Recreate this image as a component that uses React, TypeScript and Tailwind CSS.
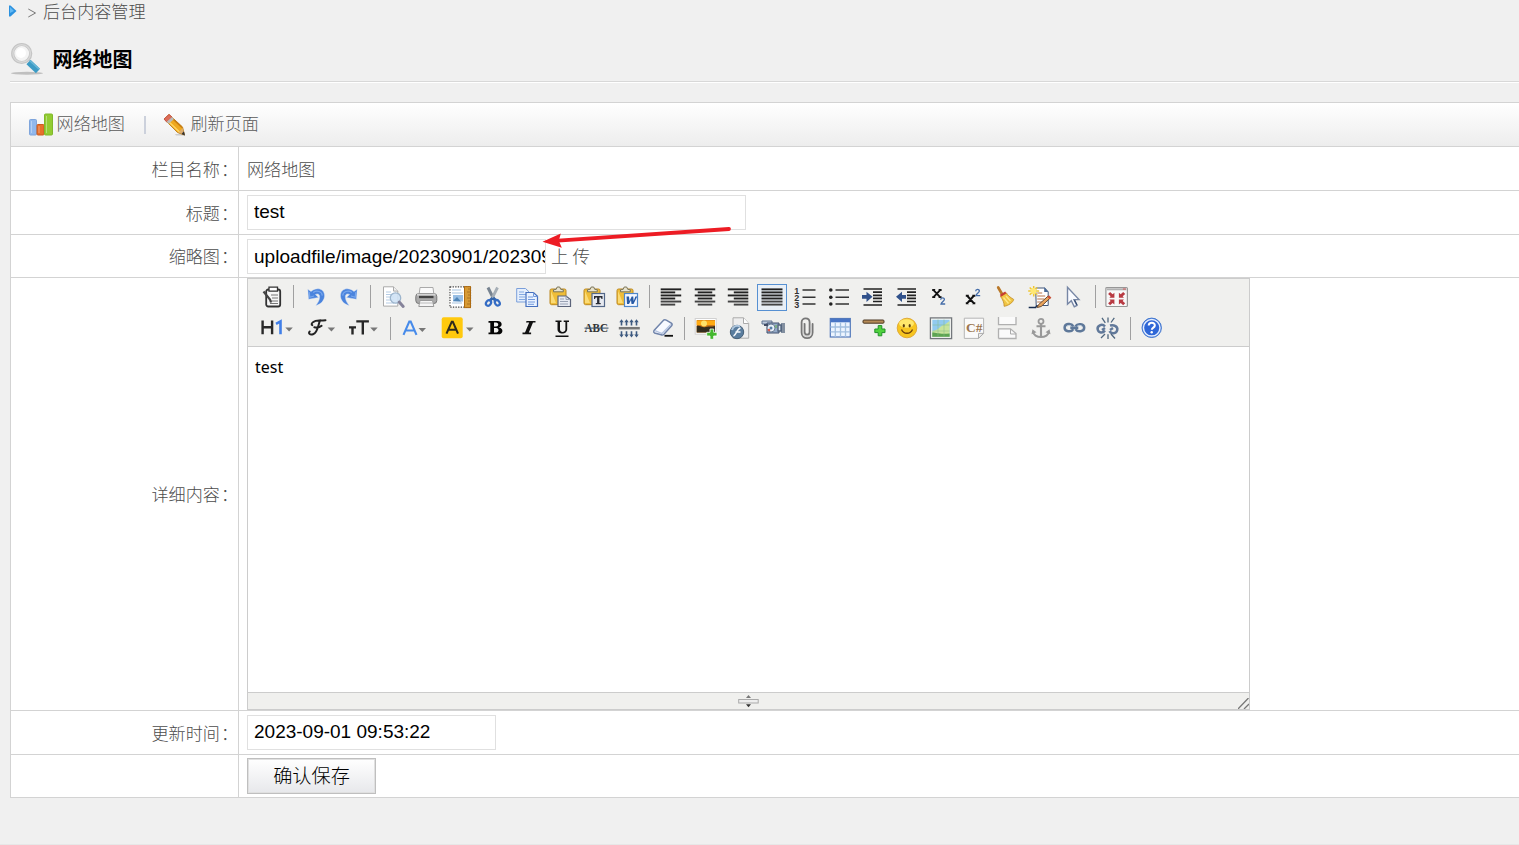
import type { ReactNode } from 'react';

function Icon({ children }: { children: ReactNode }) {
  return (
    <svg className="h-[22px] w-[22px] shrink-0 overflow-visible" viewBox="0 0 22 22" fill="none">
      {children}
    </svg>
  );
}

function Cell({ children, active }: { children: ReactNode; active?: boolean }) {
  return (
    <div className="flex h-[31px] w-[33.5px] shrink-0 items-center justify-center">
      {active ? (
        <div className="mt-[2px] flex h-[27px] w-[30px] items-center justify-center border border-[#5690d2] bg-[#e9eff6] pb-[2px]">{children}</div>
      ) : (
        children
      )}
    </div>
  );
}

function Wide({ children, arrow = 'M25 10.5h7.5l-3.7 4z' }: { children: ReactNode; arrow?: string }) {
  return (
    <div className="flex h-[31px] w-[42.6px] shrink-0 items-center justify-center">
      <svg className="h-[22px] w-[32px] overflow-visible" viewBox="0 0 32 22">
        {children}
        <path d={arrow} fill="#777" />
      </svg>
    </div>
  );
}

function Sep() {
  return (
    <div className="flex w-[10.4px] shrink-0 justify-center">
      <div className="h-[23px] w-px bg-[#a0a0a0]" />
    </div>
  );
}

const Source = () => (
  <Icon>
    <rect x="5.2" y="3.5" width="14" height="17" rx="2" fill="#f7f7f7" stroke="#333" strokeWidth="1.8" />
    <path d="M8 1.2h8.5v4H8z" fill="#fff" stroke="#333" strokeWidth="1.3" />
    <path d="M10 9h7M11 12h6M10 15h7M9 17.5h8" stroke="#777" strokeWidth="1" />
    <path d="M2.5 5.5l6.5 8 1 3" stroke="#444" strokeWidth="2.2" />
  </Icon>
);

const UndoShape = () => (
  <>
    <path d="M2.8 3.3l.8 9.9 10-1.8-3.2-2.9c2.4-1.4 4.4-.3 4.2 2.6-.1 3-1.4 5.7-3.8 8.4 6-1.5 9-5.9 8.7-10.4C19.2 3 12 .4 6 5.5z" fill="#4b84dd" stroke="#dbe5f5" strokeWidth=".4" />
    <path d="M4.2 6l.6 5.3L9 10M8.2 6.4c3.6-2.4 8.9-1 9.1 3.2" stroke="#78a7ed" strokeWidth="1.2" />
  </>
);

const Preview = () => (
  <Icon>
    <path d="M1.5.8h10l4.3 4.3v15H1.5z" fill="#fff" stroke="#aaa" />
    <path d="M11.5.8v4.3h4.3" fill="#eee" stroke="#aaa" />
    <path d="M4 6h5M4 8.5h8M4 11h8M4 14h8M4 17h8" stroke="#b5cce4" />
    <circle cx="13.5" cy="12" r="5.2" fill="#cfe2f5" fillOpacity=".9" stroke="#9db5cc" strokeWidth="1.3" />
    <path d="M17.2 16l4 4.4" stroke="#85839a" strokeWidth="3" strokeLinecap="round" />
  </Icon>
);

const Printer = () => (
  <Icon>
    <path d="M5 1.5h13l1 8H4z" fill="#fafafa" stroke="#aaa" />
    <rect x=".8" y="7.5" width="21" height="10" rx="3" fill="#aaa" stroke="#777" />
    <path d="M2 8.6h18.5" stroke="#d5d5d5" strokeWidth="2" />
    <path d="M4 11h14.5" stroke="#444" strokeWidth="2.3" />
    <path d="M5 14.5h12.5l1.3 6H3.8z" fill="#f5f5f5" stroke="#999" />
    <path d="M5 17h13" stroke="#bbb" />
  </Icon>
);

const Template = () => (
  <Icon>
    <rect x="1" y=".8" width="20.5" height="20.4" fill="#fff" stroke="#444" strokeWidth="1.2" strokeDasharray="1.3 1.3" />
    <path d="M3 4h9M3 7h11M3 17h10" stroke="#a8c3e0" strokeWidth="1.2" />
    <rect x="4" y="9" width="10" height="6.5" fill="#98bee4" />
    <path d="M4 15l4-4 4 4.5z" fill="#5186b8" />
    <rect x="15.5" y=".6" width="6" height="21" fill="#d79a35" stroke="#ad6b12" />
    <path d="M19 3h2M18 6h3M19 9h2M18 12h3M19 15h2M18 18h3" stroke="#a06a20" strokeWidth=".8" />
  </Icon>
);

const Cut = () => (
  <Icon>
    <path d="M6 1.5l5.5 11" stroke="#778390" strokeWidth="3" />
    <path d="M15.5 1.5L10 12.5" stroke="#a5aeb6" strokeWidth="2.8" />
    <path d="M10.5 12l-3 3M11 12l3.5 3" stroke="#3465aa" strokeWidth="3" />
    <ellipse cx="6.5" cy="17" rx="2.3" ry="3" stroke="#346cc4" strokeWidth="2.2" transform="rotate(35 6.5 17)" />
    <ellipse cx="15.3" cy="16.8" rx="2.2" ry="2.9" stroke="#346cc4" strokeWidth="2.2" transform="rotate(-35 15.3 16.8)" />
  </Icon>
);

const CopyPages = () => (
  <Icon>
    <path d="M.7 2.5h8.8l3.7 3.5v10H.7z" fill="#e6effc" stroke="#7b9fda" />
    <path d="M3 6h5M3 8.5h7M3 11h6M3 13.5h6" stroke="#83a9e2" />
    <path d="M10 6.5h7.5l4 3.8v10.2H10z" fill="#e9f2ff" stroke="#456fbe" strokeWidth="1.2" />
    <path d="M17.5 6.5v4h4M12 11h5M12 13.5h7M12 16h7M12 18.3h6" stroke="#7299dc" />
  </Icon>
);

const Clipboard = ({ children }: { children: ReactNode }) => (
  <Icon>
    <path d="M1 4.5Q1 3 2.5 3h13Q17 3 17 4.5V17l-2 1.7H2.5Q1 18.5 1 17z" fill="#efbd38" stroke="#bd8920" />
    <path d="M2 5l5 12H2z" fill="#ffe58b" opacity=".75" />
    <path d="M4.5 5.8v-2l2.7-.5 1-2.3h2.5l1 2.3 2.6.5v2z" fill="#e7e3cf" stroke="#7b7559" />
    {children}
  </Icon>
);

const Paste = () => (
  <Clipboard>
    <path d="M9 10h8l4.5 3.5v7H9z" fill="#e8ebf3" stroke="#5c647a" strokeWidth="1.2" />
    <path d="M17 10v3.5h4M11 13h4M11 15.5h8M11 18h8" stroke="#9aa3b5" />
  </Clipboard>
);

const PastePlain = () => (
  <Clipboard>
    <rect x="9" y="7.5" width="12.5" height="13" fill="#e7eaf1" stroke="#536788" strokeWidth="1.2" />
    <path d="M11 10h8.5v3h-1l-.6-1.5h-1.5V17h1.3v1.2h-4.9V17h1.3v-5.5h-1.5l-.6 1.5h-1z" fill="#282b34" />
  </Clipboard>
);

const PasteWord = () => (
  <Clipboard>
    <rect x="8.5" y="7.5" width="13" height="13" fill="#f4f8ff" stroke="#4f87c9" strokeWidth="1.2" />
    <path d="M10.5 10.5h2.5l.5 4.5 2.2-4.5h1.5l.5 4.5 1.7-4.5h1.8L17.5 18h-2l-.5-4-2 4h-2z" fill="#2659a5" />
  </Clipboard>
);

const Lines = ({ shift }: { shift: 'left' | 'center' | 'right' | 'full' }) => {
  const widths = shift === 'full' ? [21, 21, 21, 21, 21, 21] : [20.5, 14.5, 20.5, 14.5, 20.5, 14.5];
  return (
    <Icon>
      {widths.map((w, i) => {
        const x = shift === 'right' ? 21.3 - w : shift === 'center' ? 11 - w / 2 : shift === 'full' ? 0.5 : 0.7;
        return <rect key={i} x={x} y={2.4 + i * 3.05} width={w} height="1.9" fill={i > 3 ? '#444' : '#222'} />;
      })}
    </Icon>
  );
};

const OrderedList = () => (
  <Icon>
    <path d="M8.5 4h13M8.5 11.2h13M8.5 18h13" stroke="#333" strokeWidth="1.5" />
    <text x="0.3" y="7.5" fontSize="9" className="font-['Liberation_Sans'] font-bold" fill="#333">1</text>
    <text x="0.3" y="14.5" fontSize="9" className="font-['Liberation_Sans'] font-bold" fill="#333">2</text>
    <text x="0.3" y="21.5" fontSize="9" className="font-['Liberation_Sans'] font-bold" fill="#333">3</text>
  </Icon>
);

const BulletList = () => (
  <Icon>
    <path d="M7.5 4h13.5M7.5 11.2h13.5M7.5 18h13.5" stroke="#333" strokeWidth="1.5" />
    <g fill="#222"><circle cx="2.8" cy="4" r="1.8" /><circle cx="2.8" cy="11.2" r="1.8" /><circle cx="2.8" cy="18" r="1.8" /></g>
  </Icon>
);

const Indent = ({ out }: { out?: boolean }) => (
  <Icon>
    <path d="M2.5 3h18.5M12 6.2h9M12 9.3h9M12 12.3h9M12 15.5h9M2.5 19h18.5" stroke="#222" strokeWidth="1.7" />
    <path d={out ? 'M1 10.8l6-5v3.3h4v3.6H7V16z' : 'M11.5 10.8l-6-5v3.3H1v3.6h4.5V16z'} fill="#30518b" />
  </Icon>
);

const Script = ({ sup }: { sup?: boolean }) => (
  <Icon>
    <path d={sup ? 'M5 9.5l7 8M12 9.5l-7 8M3.8 9.7h3M10.3 9.7h3M3.8 17.3h3M10.3 17.3h3' : 'M5.3 3.8l7 7.5M12.3 3.8l-7 7.5M4.2 4h3M10.6 4h3M4.2 11.1h3M10.6 11.1h3'} stroke="#111" strokeWidth="1.9" />
    <path d={sup ? 'M13.7 5.3c0-2.4 3.7-2.4 3.7-.2 0 1.5-3 2.4-3.4 4.5h4.2' : 'M12.7 13.7c0-2.4 3.7-2.4 3.7-.2 0 1.5-3 2.4-3.4 4.5h4.2'} stroke="#446ca8" strokeWidth="1.3" />
  </Icon>
);

const Broom = () => (
  <Icon>
    <path d="M3.2 1.5l4.7 8" stroke="#b97829" strokeWidth="2.7" strokeLinecap="round" />
    <path d="M5.5 10.5l6-3.5c1 2.3 3.5 4.2 7.2 6.4-.5 3-5.5 6.5-9.6 6.9C9.3 17 7.8 13.5 5.5 10.5z" fill="#f0c544" stroke="#c28b25" strokeWidth=".8" />
    <path d="M5.4 9.7l5.4-3.3" stroke="#c73e31" strokeWidth="2.2" />
    <path d="M8.5 11.5l5 6M11 10l4.5 5" stroke="#ffe886" strokeWidth="1.3" />
  </Icon>
);

const QuickFormat = () => (
  <Icon>
    <g transform="translate(-.8 0)">
      <path d="M7.5 2h9l3.5 4v13.5h-12z" fill="#fff" stroke="#435779" />
      <path d="M16 1v5h4.5z" fill="#496996" />
      <path d="M9 7h5M9 10h8M9 13h7M9 16h6" stroke="#b87548" strokeWidth="1.2" />
      <path d="M.5 21.5h7l1-2" stroke="#162c50" strokeWidth="1.5" />
      <path d="M10 19l10-9 2 2-9 8.5-4 1z" fill="#eba45b" stroke="#694c34" />
      <path d="M19 10.8l1.8-1.5 2.4 2.5-1.7 1.5z" fill="#c95038" />
      <path d="M5.5 0v10.5M0 5h11M1.5 1.5l7.5 7.2M9 1.5L1.5 8.8" stroke="#efc633" strokeWidth="1.5" />
      <circle cx="5.3" cy="5" r="3" fill="#ffe873" />
    </g>
  </Icon>
);

const Pointer = () => (
  <Icon>
    <path d="M5.5 1.2v17l3.8-3.5 3 6 2.7-1.3-3-5.8h5z" fill="#f9fbff" stroke="#7787a5" strokeWidth="1.4" />
    <path d="M12.5 14l2.5 5" stroke="#374d72" strokeWidth="1.2" />
  </Icon>
);

const Fullscreen = () => (
  <Icon>
    <g transform="translate(-.6 0)">
      <rect x=".5" y="1.5" width="21.5" height="19" rx="1" fill="#f8f8f8" stroke="#979797" strokeWidth="1.2" />
      <path d="M1.5 2.3h19.5v2H1.5z" fill="#b1b1b1" /><path d="M17.5 3h3" stroke="#d35a5a" />
      <g fill="#b83a42"><path d="M9 6.8v5H4l1.2-1.5-2.5-2.3 2-2 2.5 2.3z" /><path d="M13.5 6.8v5h5l-1.2-1.5 2.5-2.3-2-2-2.5 2.3z" /><path d="M9 18.5v-5H4l1.2 1.5-2.5 2.3 2 2 2.5-2.3z" /><path d="M13.5 18.5v-5h5l-1.2 1.5 2.5 2.3-2 2-2.5-2.3z" /></g>
    </g>
  </Icon>
);

const HeadingIcon = () => (
  <Wide arrow="M25.3 10.5h7.5l-3.7 4z">
    <path d="M2.6 3.6v13.6M12.1 3.6v13.6M2.6 10.2h10" stroke="#292929" strokeWidth="2.4" fill="none" />
    <path d="M16 6.8l4.5-2.4v12.8" stroke="#407fe8" strokeWidth="2.6" fill="none" />
  </Wide>
);

const FontIcon = () => (
  <Wide arrow="M24.6 10.5h7.5l-3.7 4z">
    <path d="M10.3 5c3-2.5 6-.8 12.2-1.8M17.1 3.2c-2 4-2 12.3-7.1 14.1-3.2 1.1-5-1.3-3.3-2.8M11.3 10.3c2.8.7 5.4.2 7.3-1.5M10.3 5C8.3 6.2 8.3 7.7 9.3 8.1" stroke="#222" strokeWidth="2" fill="none" strokeLinecap="round" />
  </Wide>
);

const SizeIcon = () => (
  <Wide arrow="M25.2 10.5h7.5l-3.7 4z">
    <path d="M4 10.4h7M7.5 10.4v7.1M11.3 4.4h12.6M17.8 4.4v13.1" stroke="#272727" strokeWidth="2.4" fill="none" />
  </Wide>
);

const Bold = () => (
  <Icon><path d="M4.5 4h9c5 0 5.5 5.3 1.5 6.4 5 .9 4.5 6.9-1 6.9H4.5v-1.7h1.8V5.7H4.5zm5.5 1.6v4h2c3 0 3-4 0-4zm0 5.5v4.5h2.2c3.2 0 3-4.5 0-4.5z" fill="#050505" fillRule="evenodd" /></Icon>
);
const Italic = () => (
  <Icon><path d="M8.5 4h9v1.6h-2.5l-4.2 10h2.3v1.7H4.5v-1.7H7l4.2-10H8z" fill="#111" /></Icon>
);
const Underline = () => (
  <Icon><path d="M4.5 3.5h6v1.6H9v7.2c0 3.7 5.4 3.3 5.4 0V5.1h-1.7V3.5H18v1.6h-1.8v7.2c0 5.6-9.7 5.8-9.7 0V5.1h-2zM4.5 18.5h13V20h-13z" fill="#111" /></Icon>
);
const Strike = () => (
  <Icon>
    <text x="-.5" y="15.3" fontSize="13.5" textLength="23.5" lengthAdjust="spacingAndGlyphs" className="font-['Liberation_Serif'] font-bold" fill="#333">ABC</text>
    <path d="M-.5 11.1h24" stroke="#40566f" strokeWidth="1.1" />
  </Icon>
);
const LineHeight = () => (
  <Icon>
    <path d="M.8 11.2h21" stroke="#777" strokeWidth="2.5" />
    <g fill="#3d5a80">
      {[3.5, 8.5, 13.5, 18.5].map((x) => <path key={x} d={`M${x - 2.2} 5.2l2.2-3 2.2 3h-1.4V8.4h-1.6V5.2zM${x - 2.2} 17.4l2.2 3 2.2-3h-1.4v-3.2h-1.6v3.2z`} />)}
    </g>
  </Icon>
);
const Eraser = () => (
  <Icon>
    <path d="M2 13.5L11.5 3.2c1-.8 2-.6 2.8 0l5 3c1 .8 1 1.7.3 2.6l-7.7 8.4c-.8.8-1.8 1-2.7.6L2.5 16c-1-.7-1-1.6-.5-2.5z" fill="#f8faff" stroke="#7084aa" strokeWidth="1.5" />
    <path d="M3 13.7l7 2.8 8.8-9" stroke="#b2c2df" strokeWidth="1.3" />
    <path d="M12.5 18.8h8.5" stroke="#111" strokeWidth="1.8" />
  </Icon>
);

const ImageIcon = () => (
  <Icon>
    <rect x=".2" y="1.5" width="21" height="15.7" fill="#fff" stroke="#d1d1d1" />
    <path d="M1.7 3h18.3v12.5H1.7z" fill="#cc7919" /><path d="M1.7 3.5H20V8H1.7z" fill="#ffab13" />
    <path d="M1.7 9c4-1 5 2 9 1s5.3 0 9.3-1v6.5H1.7z" fill="#342d1e" />
    <circle cx="9" cy="6.5" r="3" fill="#ffe26a" />
    <path d="M15 12h3.7v3.3h3.3V19h-3.3v3.3H15V19h-3.3v-3.7H15z" fill="#44b82e" stroke="#fff" strokeWidth=".8" />
  </Icon>
);
const Flash = () => (
  <Icon>
    <path d="M4 .8h10.5l5.2 5.7v14.7H4z" fill="#eee" stroke="#aaa" /><path d="M14.5.8v5.7h5.2" fill="#fff" stroke="#aaa" />
    <circle cx="8" cy="15" r="6.7" fill="#5a7d9e" stroke="#476077" />
    <path d="M3 13c1-4 5-5 8-3.5" stroke="#aec6dd" strokeWidth="2" />
    <path d="M4.5 19c3-1 3-7 7-8M6.5 15h5" stroke="#f5f8fb" strokeWidth="1.5" />
  </Icon>
);
const Media = () => (
  <Icon>
    <path d="M0 4h10v3H0z" fill="#becadb" stroke="#61738f" /><path d="M5 6h12v10H5z" fill="#93a9c7" stroke="#40516f" />
    <circle cx="9" cy="11" r="4" fill="#e7f0fa" stroke="#6d7e95" /><circle cx="9" cy="11" r="1.5" fill="#547ea5" />
    <path d="M16 8h3v6h-3zM20 6v10M22 6v10" fill="#dae4ef" stroke="#53657e" strokeWidth="1.4" />
    <path d="M2 8h4" stroke="#414c64" strokeWidth="2" /><circle cx="7" cy="13" r="1.3" fill="#e15b4b" /><path d="M14 8v3" stroke="#65b34a" />
  </Icon>
);
const Clip = () => (
  <Icon>
    <path d="M16.6 7v8.5c0 7.5-11 7.5-11 0V5.2c0-5.1 8-5.1 8 0v9.7c0 3.6-5 3.6-5 0V7" stroke="#777" strokeWidth="1.8" strokeLinecap="round" />
    <path d="M15.3 8v7.7c0 5.1-7.8 5.1-7.8 0V6" stroke="#c7c7c7" strokeWidth=".8" />
  </Icon>
);
const TableIcon = () => (
  <Icon>
    <g transform="translate(.5 0)">
      <rect x=".8" y="1.5" width="20" height="18.5" fill="#edf5ff" stroke="#5379bb" strokeWidth="1.2" />
      <path d="M1 2h19.5v3.3H1z" fill="#4975c5" />
      <path d="M1 10h19.5M1 14.8h19.5M5.8 5.5V20M11 5.5V20M16 5.5V20" stroke="#a2bfdf" strokeWidth="1.3" />
    </g>
  </Icon>
);
const RuleIcon = () => (
  <Icon>
    <rect x="0" y="3" width="21" height="3.2" rx="1" fill="#b68b57" stroke="#4c3824" />
    <path d="M15.2 8.6h3.6V12H22v3.6h-3.2v3.2h-3.6v-3.2h-3.4V12h3.4z" fill="#4fd23d" stroke="#229229" />
  </Icon>
);
const Smile = () => (
  <Icon>
    <circle cx="11" cy="11" r="9.8" fill="#f7c51f" stroke="#e0ab38" />
    <ellipse cx="10.5" cy="6.5" rx="7.5" ry="4.2" fill="#ffe76b" />
    <ellipse cx="7.8" cy="8.8" rx="1.1" ry="1.8" fill="#5b3d0d" /><ellipse cx="13.7" cy="8.8" rx="1.1" ry="1.8" fill="#5b3d0d" />
    <path d="M5.5 12.5c2 5 9 5 11 0" stroke="#6b3f0b" strokeWidth="1.3" />
  </Icon>
);
const MapIcon = () => (
  <Icon>
    <rect x=".4" y=".9" width="21.2" height="20.7" fill="#f4f5f2" stroke="#73777c" strokeWidth="1.3" />
    <path d="M2.3 2.8h17.3v17H2.3z" fill="#91caf0" /><path d="M2.3 14c7-.5 8-6 12-6l5.3-4v15.8H2.3z" fill="#c8e39c" />
    <path d="M2.3 15.5c5 0 6 2 17.3 1v3.3H2.3z" fill="#5da453" /><path d="M8 2.5v17M14 2.5v17M2.5 8h17M2.5 14h17" stroke="#86b886" strokeWidth=".5" />
  </Icon>
);
const Code = () => (
  <Icon>
    <path d="M1.3 1.2h19.3v15.3L15.5 21.4H1.3z" fill="#fafafa" stroke="#b5b5b5" /><path d="M15.5 21.4v-5h5z" fill="#eee" stroke="#aaa" />
    <text x="3" y="15.3" fontSize="13" textLength="16.5" lengthAdjust="spacingAndGlyphs" className="font-['Liberation_Serif'] font-bold" fill="#9c7650">C#</text>
  </Icon>
);
const PageBreak = () => (
  <Icon>
    <path d="M1.5 0v7.7H19V0M1.5 21.5v-9.7h12l5.5 4.7v5H1.5" fill="#fafafa" stroke="#b0b0b0" strokeWidth="1.3" />
    <path d="M13.5 12v5H19" stroke="#aaa" />
  </Icon>
);
const Anchor = () => (
  <Icon>
    <g transform="translate(.5 .3)">
      <circle cx="10.5" cy="4" r="2.5" stroke="#999" strokeWidth="1.8" />
      <path d="M10.5 6.5v13M6 9h9M2.5 14.2c.2 3.4 4 5.5 8 5.5s7.8-2.1 8-5.5" stroke="#999" strokeWidth="2.1" />
      <path d="M1 17l1-5 4 3zM20 17l-1-5-4 3z" fill="#999" />
    </g>
  </Icon>
);
const LinkShape = () => (
  <g transform="translate(-.7 -.1)">
    <path d="M10 12.2c-2 3.5-8.7 2.7-8.7-1.4s6.6-5 8.7-1.5M12.2 9.3c2.2-3.2 8.7-2.3 8.7 1.5s-6.5 5-8.7 1.4" stroke="#5e7899" strokeWidth="2.5" />
    <path d="M7 10.8h8" stroke="#5e7899" strokeWidth="2.7" /><path d="M3.5 9.4c2-1.4 3.5-1 4.5 0M14 9.3c1.4-1.3 3.8-1 4.8.2" stroke="#bcccdc" />
  </g>
);
const Unlink = () => (
  <Icon>
    <g transform="translate(-1 0)">
      <path d="M9 9.5c-3-3.5-8.2-.7-7.3 3 .9 3.7 5.2 4 7.2 1M6 13l3-2M14 8.5c4-1.2 8.2 1.2 7.2 4.7-.9 3.5-6.1 4-7.7 1M14 13l3-2" stroke="#61799a" strokeWidth="2.5" />
      <path d="M6 .8l3.3 5M12 .5v5M18.3.8L15 5.5M9 17l-4 4M12 17.2V22M15 17l4 4.5" stroke="#50677f" strokeWidth="1.3" />
    </g>
  </Icon>
);
const Help = () => (
  <Icon>
    <circle cx="10.7" cy="10.8" r="9.7" fill="#2f67d7" stroke="#4479d0" /><circle cx="10.7" cy="10.8" r="8.3" stroke="#e5efff" strokeWidth="1.5" />
    <path d="M7.7 8.5c.2-3.8 6.4-3.5 6.1.1-.1 2-3 2.1-3 4.2" stroke="white" strokeWidth="2" /><circle cx="10.7" cy="15.2" r="1.2" fill="white" />
  </Icon>
);

function EditorToolbar() {
  return (
    <div className="h-[68px] border-b border-[#ccc] bg-[#f0f0ee] pt-[2px] pl-[6.9px]">
      <div className="flex h-[31px] items-center">
        <Cell><Source /></Cell><Sep />
        <Cell><Icon><UndoShape /></Icon></Cell>
        <Cell><Icon><g transform="matrix(-1 0 0 1 22 0)"><UndoShape /></g></Icon></Cell><Sep />
        <Cell><Preview /></Cell><Cell><Printer /></Cell><Cell><Template /></Cell><Cell><Cut /></Cell><Cell><CopyPages /></Cell>
        <Cell><Paste /></Cell><Cell><PastePlain /></Cell><Cell><PasteWord /></Cell><Sep />
        <Cell><Lines shift="left" /></Cell><Cell><Lines shift="center" /></Cell><Cell><Lines shift="right" /></Cell><Cell active><Lines shift="full" /></Cell>
        <Cell><OrderedList /></Cell><Cell><BulletList /></Cell><Cell><Indent /></Cell><Cell><Indent out /></Cell>
        <Cell><Script /></Cell><Cell><Script sup /></Cell><Cell><Broom /></Cell><Cell><QuickFormat /></Cell><Cell><Pointer /></Cell><Sep />
        <Cell><Fullscreen /></Cell>
      </div>
      <div className="flex h-[31px] items-center pt-px">
        <HeadingIcon /><FontIcon /><SizeIcon /><div className="mr-[-3px] ml-[3px]"><Sep /></div>
        <Wide arrow="M20.5 11H28l-3.7 4z"><path d="M5.5 17.8L11.3 4.5h1.4l5.8 13.3M7.7 13.5h8.5" stroke="#478bea" strokeWidth="2.1" fill="none" /></Wide>
        <Wide><rect x=".7" y=".2" width="21" height="21" rx="2" fill="#ffc90e" /><path d="M5.5 16.7l5.3-12h1l5.2 12M7.5 12.7h7.5" stroke="#302b1d" strokeWidth="2.1" fill="none" /></Wide>
        <Cell><Bold /></Cell><Cell><Italic /></Cell><Cell><Underline /></Cell><Cell><Strike /></Cell><Cell><LineHeight /></Cell><Cell><Eraser /></Cell><Sep />
        <Cell><ImageIcon /></Cell><Cell><Flash /></Cell><Cell><Media /></Cell><Cell><Clip /></Cell><Cell><TableIcon /></Cell><Cell><RuleIcon /></Cell><Cell><Smile /></Cell>
        <Cell><MapIcon /></Cell><Cell><Code /></Cell><Cell><PageBreak /></Cell><Cell><Anchor /></Cell><Cell><Icon><LinkShape /></Icon></Cell><Cell><Unlink /></Cell><Sep />
        <Cell><Help /></Cell>
      </div>
    </div>
  );
}

function Editor() {
  return (
    <div className="flex h-[432px] w-[1003px] flex-col border border-[#ccc] bg-white">
      <EditorToolbar />
      <div className="flex-1 px-[7px] pt-[8px] font-['Noto_Sans',sans-serif] text-[16px] leading-[24px] font-normal text-black">test</div>
      <div className="flex h-[17px] items-end justify-between border-t border-[#ccc] bg-[#f0f0ee]">
        <svg className="ml-[490px] h-4 w-[22px]" viewBox="0 0 22 16">
          <path d="M8 5h5l-2.5-3z" fill="#777" /><rect x=".7" y="6.5" width="19.5" height="3.5" fill="#eee" stroke="#aaa" /><path d="M8 11.3h5l-2.5 3z" fill="#333" />
        </svg>
        <svg className="h-[11px] w-[11px]" viewBox="0 0 11 11"><path d="M0 11L10.5 0M6 11l5-5" stroke="#777" strokeWidth="1.3" fill="none" /></svg>
      </div>
    </div>
  );
}

function Row({ label, children, height }: { label: string; children: ReactNode; height: string }) {
  return (
    <div className={`flex border-b border-[#d3d3d3] bg-white ${height}`}>
      <div className="flex w-[228px] shrink-0 items-center justify-end border-r border-[#d3d3d3]">
        {label && <><span>{label}</span><span className="pl-px">：</span></>}
      </div>
      <div className="flex flex-1 items-center pl-2">{children}</div>
    </div>
  );
}

function Field({ value, width }: { value: string; width: string }) {
  return (
    <input
      readOnly
      value={value}
      className={`h-[35px] shrink-0 border border-[#e0e0e0] bg-white pl-[6px] font-['Liberation_Sans',sans-serif] text-[19px] font-normal text-black outline-none ${width}`}
    />
  );
}

export default function App() {
  return (
    <div className="relative h-[845px] w-[1519px] overflow-hidden border-b border-[#e7e7e7] bg-[#f0f0f0] font-['Noto_Sans_CJK_SC',sans-serif] text-[17.1px] font-light text-[#4c4c4c]">
      <div className="flex h-[25px] items-center pl-[9px]">
        <svg className="mb-[3px] h-3 w-2" viewBox="0 0 8 12"><path d="M0 .5h1.5L7.5 6l-6 5.5H0z" fill="#2b91df" /><path d="M1 2l4 4-4 2z" fill="#62b9f4" /></svg>
        <svg className="ml-[11px] h-3 w-2" viewBox="0 0 8 12"><path d="M.3 2L7.5 6l-7.2 4" fill="none" stroke="#777" /></svg>
        <span className="ml-[7px] pb-[3px]">后台内容管理</span>
      </div>
      <div className="ml-[10px] flex h-[58px] items-start border-b border-white">
        <div className="flex h-[57px] w-full items-center border-b border-[#d8d8d8] pt-[12px]">
          <svg className="h-[34px] w-[34px]" viewBox="0 0 34 34" fill="none">
            <ellipse cx="17" cy="31.2" rx="16" ry="1.5" fill="#aaa" opacity=".7" />
            <path d="M18.5 20l9.5 9" stroke="#3c9bc5" strokeWidth="6" /><path d="M19 18l10 9" stroke="#68b8d8" strokeWidth="1.5" />
            <circle cx="11.7" cy="11.5" r="9" fill="#f4f4f4" stroke="#c4c4c4" strokeWidth="3.2" /><circle cx="11.7" cy="11.5" r="8.8" stroke="#d8d8d8" strokeWidth="1.4" /><circle cx="11" cy="11" r="5" fill="#fff" />
          </svg>
          <h1 className="ml-[8.5px] text-[20px] font-bold text-black">网络地图</h1>
        </div>
      </div>
      <div className="mt-[19px] ml-[10px] border-t border-l border-[#d3d3d3]">
        <div className="flex h-11 items-center border-b border-[#d3d3d3] bg-linear-to-b from-white to-[#ededed] pl-[18px] text-[#5a5a5a]">
          <svg className="h-6 w-6" viewBox="0 0 24 24">
            <rect x=".5" y="6.5" width="7" height="15.5" rx="1" fill="#91b8ed" stroke="#7fa5dc" /><rect x="8" y="11.5" width="7" height="10.5" rx="1" fill="#e7702b" stroke="#cc5c20" /><rect x="15.5" y="1" width="8" height="21" rx="1" fill="#92cc32" stroke="#80b82b" />
            <path d="M2.5 8v12M10 13v7M17.5 3v17" stroke="#fff" opacity=".35" />
          </svg>
          <span className="ml-[3.6px] pb-[3px]">网络地图</span>
          <div className="ml-[19px] h-[18px] w-[2px] bg-[#ccd1dc]" />
          <svg className="ml-[17px] h-6 w-6" viewBox="0 0 24 24">
            <path d="M12 21h10v1.5H13z" fill="#ccc" /><path d="M1 6l5-4.5L19.5 14l2 8-7-2.5z" fill="#efa91e" stroke="#c28426" />
            <path d="M5 8L17 19.5" stroke="#ffd461" strokeWidth="1.5" /><path d="M9.5 5.5L19 14.5" stroke="#c77c12" strokeWidth="1.5" /><path d="M1 6l5-4.5L9 4 3.7 9z" fill="#dd6d5a" stroke="#c55a48" /><path d="M3.7 8.7L9 4l2 2-5.2 4.7z" fill="#bbb" /><path d="M15.5 19.5l4-4.2L22 22z" fill="#dcae72" /><path d="M18.5 21l2.4-2.8L22 22.4z" fill="#333" />
          </svg>
          <span className="ml-[3.5px] pb-[3px]">刷新页面</span>
        </div>
        <Row label="栏目名称" height="h-11">网络地图</Row>
        <Row label="标题" height="h-11"><Field value="test" width="w-[499px] pb-[2px]" /></Row>
        <Row label="缩略图" height="h-[43px]"><Field value="uploadfile/image/20230901/20230901095322.png" width="w-[299px] pt-[2px] tracking-[0.03px]" /><span className="ml-[5px] text-[17.6px]">上 传</span></Row>
        <Row label="详细内容" height="h-[433px]"><Editor /></Row>
        <Row label="更新时间" height="h-11"><Field value="2023-09-01 09:53:22" width="w-[249px] pb-[2px]" /></Row>
        <Row label="" height="h-[43px]"><button className="h-9 w-[129px] border border-[#bfbfbf] bg-linear-to-b from-white to-[#e7e8eb] pb-[2px] text-[19.2px] leading-[30px] text-black shadow-[inset_0_0_0_1px_#e0e0e0]">确认保存</button></Row>
      </div>
      <svg className="absolute top-[225px] left-[540px] h-[28px] w-[194px]" viewBox="540 225 194 28">
        <path d="M729 229L558 240.7" stroke="#ed1c24" strokeWidth="3.8" strokeLinecap="round" /><path d="M542.5 241.7l18.3-8.2-2 7.3 3 7z" fill="#ed1c24" />
      </svg>
    </div>
  );
}
